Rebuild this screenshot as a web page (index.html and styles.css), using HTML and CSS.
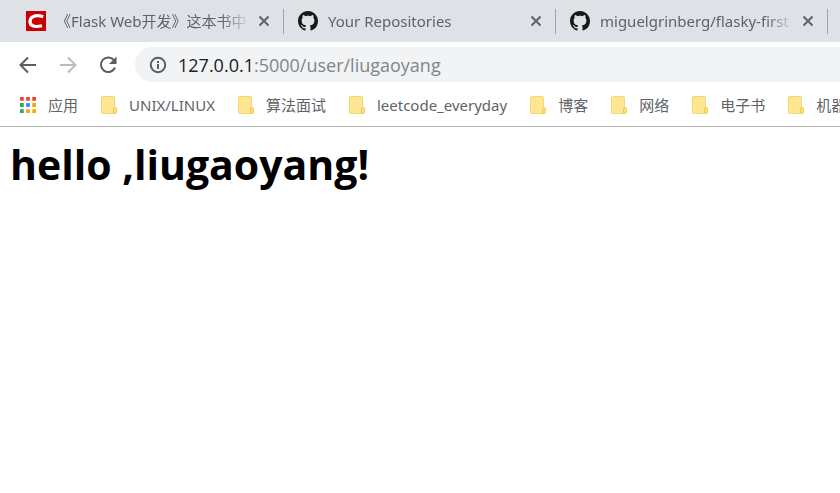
FILE: index.html
```html
<!DOCTYPE html>
<html lang="zh-CN">
<head>
<meta charset="utf-8">
<title>127.0.0.1:5000/user/liugaoyang</title>
<link rel="stylesheet" href="styles.css">
</head>
<body>
<svg class="defs" aria-hidden="true">
  <symbol id="close" viewBox="0 0 12 12"><path d="M1.500 1.500 10.500 10.500M10.500 1.500 1.500 10.500" fill="none" stroke="#5f6368" stroke-width="2"/></symbol>
  <symbol id="github" viewBox="0 0 16 16"><path fill="#15171a" d="M8 0C3.580 0 0 3.580 0 8c0 3.540 2.290 6.530 5.470 7.590.4.070.55-.17.55-.38 0-.19-.01-.82-.01-1.490-2.010.37-2.530-.49-2.690-.94-.09-.23-.48-.94-.82-1.130-.28-.15-.68-.52-.01-.53.63-.01 1.080.58 1.230.82.72 1.210 1.870.87 2.330.66.07-.52.28-.87.51-1.070-1.780-.2-3.640-.89-3.640-3.950 0-.87.31-1.590.82-2.150-.08-.2-.36-1.020.08-2.120 0 0 .67-.21 2.200.82.64-.18 1.320-.27 2-.27s1.360.09 2 .27c1.530-1.040 2.200-.82 2.200-.82.44 1.100.16 1.920.08 2.120.51.56.82 1.270.82 2.150 0 3.070-1.870 3.750-3.650 3.950.29.25.54.73.54 1.480 0 1.070-.01 1.930-.01 2.200 0 .21.15.46.55.38A8.010 8.010 0 0 0 16 8c0-4.420-3.580-8-8-8z"/></symbol>
  <symbol id="folder" viewBox="0 0 16 18"><rect x=".5" y=".5" width="13" height="17" rx="1" fill="#ffe692" stroke="#f5d774"/><path d="M12.500 17.500V13q0-1.500 1.500-1.500t1.500 1.500v3q0 1.500-1.500 1.500z" fill="#ffe077" stroke="#f2cc50"/></symbol>
</svg>
<header class="browser">
  <nav class="tabs" aria-label="Tabs">
    <div class="tab">
      <svg class="favicon" viewBox="0 0 20 20"><path fill="#ca0000" d="M0 0h20v20H0z"/><path fill="none" stroke="#fff" stroke-width="3.200" d="M17.200 5.700C9.500 3.400 4.500 5.200 4 10.200 3.500 15.500 9 16.400 16 14.700"/></svg>
      <a class="title" href="#">《Flask Web开发》这本书中</a>
      <button class="close" aria-label="Close tab"><svg><use href="#close"/></svg></button>
    </div>
    <div class="tab">
      <svg class="favicon"><use href="#github"/></svg>
      <a class="title" href="#">Your Repositories</a>
      <button class="close" aria-label="Close tab"><svg><use href="#close"/></svg></button>
    </div>
    <div class="tab">
      <svg class="favicon"><use href="#github"/></svg>
      <a class="title" href="#">miguelgrinberg/flasky-first</a>
      <button class="close" aria-label="Close tab"><svg><use href="#close"/></svg></button>
    </div>
  </nav>
  <div class="toolbar">
    <button class="nav" aria-label="Back"><svg viewBox="0 0 20 20"><path d="M18 10H3M10 2.500 2.500 10 10 17.500"/></svg></button>
    <button class="nav" aria-label="Forward" disabled><svg viewBox="0 0 20 20"><path d="M2 10h15M10 2.500 17.500 10 10 17.500"/></svg></button>
    <button class="nav" aria-label="Reload"><svg viewBox="0 0 20 20"><path d="M16.200 5.500A7.300 7.300 0 1 0 17 12.500"/><path class="solid" d="M18.500 1.500V9H11z"/></svg></button>
    <div class="address">
      <button class="info" aria-label="Site information"><svg viewBox="0 0 18 18"><circle cx="9" cy="9" r="7.200"/><path d="M9 8v5M9 5v2"/></svg></button>
      <a class="url" href="#"><span class="host">127.0.0.1</span>:5000/user/liugaoyang</a>
    </div>
  </div>
  <nav class="bookmarks" aria-label="Bookmarks">
    <a class="bookmark" href="#"><svg class="apps" viewBox="0 0 17 17"><path fill="#f44336" d="M0 0h4v4H0zM6.500 0h4v4h-4zM13 0h4v4h-4z"/><path fill="#34a853" d="M0 6.500h4v4H0zM0 13h4v4H0z"/><path fill="#2492f5" d="M6.500 6.500h4v4h-4z"/><path fill="#fba70b" d="M13 6.500h4v4h-4zM13 13h4v4h-4zM6.500 13h4v4h-4z"/></svg>应用</a>
    <a class="bookmark" href="#"><svg class="folder"><use href="#folder"/></svg>UNIX/LINUX</a>
    <a class="bookmark" href="#"><svg class="folder"><use href="#folder"/></svg>算法面试</a>
    <a class="bookmark" href="#"><svg class="folder"><use href="#folder"/></svg>leetcode_everyday</a>
    <a class="bookmark" href="#"><svg class="folder"><use href="#folder"/></svg>博客</a>
    <a class="bookmark" href="#"><svg class="folder"><use href="#folder"/></svg>网络</a>
    <a class="bookmark" href="#"><svg class="folder"><use href="#folder"/></svg>电子书</a>
    <a class="bookmark" href="#"><svg class="folder"><use href="#folder"/></svg>机器</a>
  </nav>
</header>
<main class="page">
  <h1>hello ,liugaoyang!</h1>
</main>
</body>
</html>
```
FILE: styles.css
```css
* { box-sizing: border-box; }
body {
  margin: 0;
  background: #fff;
  color: #000;
  font-family: "Noto Sans", "Noto Sans CJK SC", sans-serif;
}
a { color: inherit; text-decoration: none; }
button { border: 0; padding: 0; background: none; }
svg { display: block; flex: none; }
.defs { display: none; }
.browser { overflow: hidden; border-bottom: 1px solid #b3b3b3; }

.tabs {
  display: flex;
  height: 42px;
  padding: 0 12px;
  background: #dee1e6;
}
.tab {
  position: relative;
  display: flex;
  flex: 1 0 0;
  align-items: center;
  min-width: 0;
  padding: 0 14px;
}
.tab::after {
  content: "";
  position: absolute;
  right: 0;
  top: 9px;
  width: 1px;
  height: 25px;
  background: #a0a3a8;
}
.favicon { width: 20px; height: 20px; }
.title {
  flex: 1;
  min-width: 0;
  margin-left: 10px;
  overflow: hidden;
  white-space: nowrap;
  font-size: 15px;
  line-height: 24px;
  color: #5f6368;
  mask-image: linear-gradient(to left, transparent, #000 28px);
}
.close { flex: none; margin-left: 8px; }
.close svg { width: 12px; height: 12px; }

.toolbar {
  display: flex;
  align-items: center;
  height: 45px;
  padding-left: 18px;
}
.nav { flex: none; width: 20px; height: 20px; margin-right: 20px; }
.nav svg { width: 20px; height: 20px; fill: none; stroke: #5a5d62; stroke-width: 2; }
.nav:disabled svg { stroke: #babcbe; }
.nav .solid { fill: #5a5d62; stroke: none; }
.address {
  display: flex;
  flex: 1;
  align-items: center;
  height: 35px;
  margin-left: -3px;
  padding-left: 14px;
  border-radius: 18px 0 0 18px;
  background: #f1f3f4;
}
.info svg { width: 18px; height: 18px; fill: none; stroke: #5a5d62; stroke-width: 2; }
.url, h1 { font-family: "Open Sans", sans-serif; }
.url { margin-left: 11px; font-size: 18px; line-height: 26px; color: #80868b; white-space: nowrap; }
.host { color: #202124; }

.bookmarks {
  display: flex;
  gap: 23px;
  align-items: center;
  height: 39px;
  padding: 0 0 3px 20px;
  overflow: hidden;
}
.bookmark {
  display: flex;
  flex: none;
  align-items: center;
  gap: 12px;
  font-size: 15px;
  line-height: 24px;
  color: #5f6368;
  white-space: nowrap;
}
.apps, .folder { width: 16px; }
.apps { height: 16px; }
.folder { height: 18px; }

.page { padding: 8px 10px; }
h1 { margin: 0; font-size: 41px; line-height: 58px; font-weight: 700; }
```
